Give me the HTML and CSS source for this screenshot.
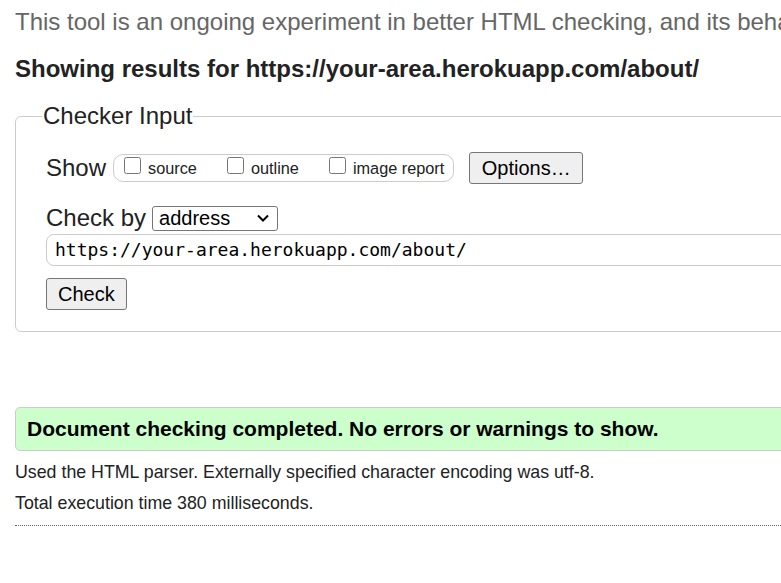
FILE: index.html
```html
<!DOCTYPE html>
<html lang="en">
<head>
<meta charset="utf-8">
<title>Nu Html Checker</title>
<link rel="stylesheet" href="styles.css">
</head>
<body>
<div class="page">
  <p class="intro">This tool is an ongoing experiment in better HTML checking, and its behavior remains subject to change</p>
  <h2 class="results-title">Showing results for https://your-area.herokuapp.com/about/</h2>
  <form class="checker">
    <fieldset class="checker-fieldset">
      <legend class="checker-legend">Checker Input</legend>
      <div class="row show-row">
        <span class="row-label">Show</span>
        <span class="show-group">
          <label class="opt"><input type="checkbox" class="cb"><span>source</span></label>
          <label class="opt"><input type="checkbox" class="cb"><span>outline</span></label>
          <label class="opt"><input type="checkbox" class="cb"><span>image report</span></label>
        </span>
        <button type="button" class="btn">Options…</button>
      </div>
      <div class="row checkby-row">
        <span class="row-label">Check by</span>
        <span class="select">
          <span class="select-text">address</span>
          <svg class="chev" width="14" height="10" viewBox="0 0 14 10"><path d="M2 2.5 L7 7.5 L12 2.5" fill="none" stroke="#000" stroke-width="2"/></svg>
        </span>
      </div>
      <div class="url-input">https://your-area.herokuapp.com/about/</div>
      <div class="row">
        <button type="button" class="btn check-btn">Check</button>
      </div>
    </fieldset>
  </form>
  <div class="success">Document checking completed. No errors or warnings to show.</div>
  <p class="details">Used the HTML parser. Externally specified character encoding was utf-8.</p>
  <p class="details">Total execution time 380 milliseconds.</p>
  <hr class="sep">
</div>
</body>
</html>
```
FILE: styles.css
```css
html, body {
  margin: 0;
  padding: 0;
  background: #fff;
  overflow: hidden;
}
body {
  font-family: "Liberation Sans", Arial, sans-serif;
  color: #222;
}
.page {
  width: 1100px;
  padding: 8px 0 0 15px;
}
.intro {
  margin: 0;
  font-size: 24px;
  line-height: 28px;
  color: #666;
  white-space: nowrap;
}
.results-title {
  margin: 19px 0 0 0;
  font-size: 24px;
  line-height: 28px;
  font-weight: bold;
  color: #222;
}
.checker {
  margin-top: 19px;
}
.checker-fieldset {
  margin: 0;
  border: 1px solid #ccc;
  border-radius: 6px;
  padding: 22px 30px 21px 30px;
}
.checker-legend {
  font-size: 24px;
  line-height: 28px;
  padding: 0 1px;
  margin-left: -4px;
  color: #222;
}
.row {
  display: flex;
  align-items: center;
}
.row-label {
  font-size: 24px;
  line-height: 28px;
  color: #222;
}
.show-row {
  height: 32px;
}
.show-group {
  display: flex;
  align-items: center;
  margin-left: 7px;
  height: 26px;
  border: 1px solid #ccc;
  border-radius: 10px;
  padding: 0 9px 0 10px;
}
.opt {
  display: flex;
  align-items: center;
  font-size: 16.3px;
  color: #222;
  margin-right: 30px;
}
.opt:last-child {
  margin-right: 0;
}
.cb {
  width: 17px;
  height: 17px;
  margin: 0 7px 5px 0;
}
.btn {
  font-family: "Liberation Sans", Arial, sans-serif;
  font-size: 20px;
  height: 32px;
  padding: 0 11.5px;
  background: #efefef;
  border: 1px solid #767676;
  border-radius: 3px;
  color: #000;
  margin-left: 15px;
}
.checkby-row {
  margin-top: 20px;
}
.select {
  display: flex;
  align-items: center;
  justify-content: space-between;
  width: 126px;
  height: 25px;
  box-sizing: border-box;
  margin-left: 6px;
  border: 1px solid #767676;
  border-radius: 3px;
  padding: 0 7px 0 6px;
  font-size: 20px;
  color: #000;
}
.chev {
  display: block;
}
.url-input {
  margin-top: 2px;
  height: 32px;
  box-sizing: border-box;
  border: 1px solid #ccc;
  border-radius: 8px;
  padding: 0 0 0 8px;
  font-family: "DejaVu Sans Mono", monospace;
  font-size: 18px;
  line-height: 30px;
  color: #000;
}
.check-btn {
  margin-left: 0;
  margin-top: 12px;
  padding: 0 11px;
}
.success {
  margin-top: 75px;
  margin-bottom: 1px;
  height: 44px;
  box-sizing: border-box;
  background: #ccffcc;
  border: 1px solid #ccc;
  border-radius: 5px;
  padding: 0 11px;
  display: flex;
  align-items: center;
  font-size: 21px;
  font-weight: bold;
  color: #000;
}
.details {
  margin: 11px 0 0 0;
  font-size: 17.8px;
  line-height: 20px;
  color: #222;
}
.sep {
  margin: 12px 0 0 0;
  border: 0;
  border-top: 1px dotted #666;
  height: 0;
}
```
